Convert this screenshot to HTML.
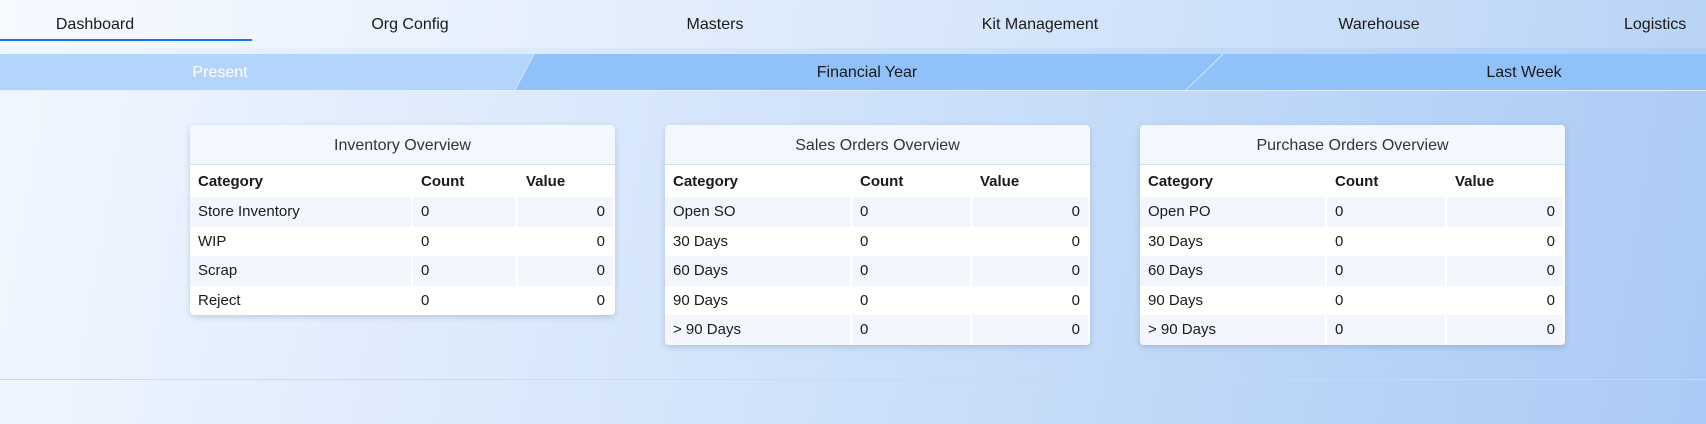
<!DOCTYPE html>
<html><head><meta charset="utf-8"><style>
*{box-sizing:border-box;margin:0;padding:0}
body{width:1706px;height:424px;overflow:hidden;font-family:"Liberation Sans",sans-serif;color:#1a1a1a;
background:linear-gradient(100deg,#f1f7ff 0%,#d6e6fb 40%,#bcd6f8 75%,#abcaf5 100%);position:relative}
.nav{position:absolute;left:0;top:0;width:1706px;height:48px;background:linear-gradient(90deg,rgba(255,255,255,.35),rgba(255,255,255,.15))}
.nav span{position:absolute;top:16px;font-size:16px;transform:translateX(-50%);white-space:nowrap}
.ul{position:absolute;left:0;top:39px;width:252px;height:2px;background:#1a73e8}
.sub{position:absolute;left:0;top:54px;width:1706px;height:36px;background:#90c1f9}
.sub span{position:absolute;top:10px;font-size:16px;transform:translateX(-50%)}
.line{position:absolute;left:0;width:1706px;height:1px;background:#e4eefc}
.card{position:absolute;top:125px;width:425px;background:#fff;border-radius:4px;box-shadow:0 2px 6px rgba(60,90,140,.25);overflow:hidden}
.card h3{height:40px;background:#f3f8fe;border-bottom:1px solid #d3dfec;font-weight:normal;font-size:16px;text-align:center;line-height:42px;color:#333}
table{width:100%;border-collapse:collapse;font-size:15px;table-layout:fixed}
td,th{height:29.5px;padding:0 8px;text-align:left;border-right:2px solid #fff}
th{font-weight:bold;height:32px}
td:nth-child(3){text-align:right}
tr.s td{background:#f3f7fd}
</style></head><body>
<div class="nav">
<span style="left:95px">Dashboard</span>
<span style="left:410px">Org Config</span>
<span style="left:715px">Masters</span>
<span style="left:1040px">Kit Management</span>
<span style="left:1379px">Warehouse</span>
<span style="left:1624px;transform:none">Logistics</span>
<div class="ul"></div>
</div>
<div class="sub">
<svg width="1706" height="36" style="position:absolute;left:0;top:0">
<polygon points="0,0 534,0 515,36 0,36" fill="#b3d4fb"/>
<line x1="534" y1="0" x2="515" y2="36" stroke="#d8e8fd" stroke-width="1"/>
<line x1="1223" y1="0" x2="1186" y2="36" stroke="#d8e8fd" stroke-width="1"/>
</svg>
<span style="left:220px;color:#fff">Present</span>
<span style="left:867px">Financial Year</span>
<span style="left:1524px">Last Week</span>
</div>
<div class="line" style="top:90px"></div>
<div class="line" style="top:379px;background:#c6daf5"></div>

<div class="card" style="left:190px"><h3>Inventory Overview</h3><table>
<colgroup><col style="width:222px"><col style="width:105px"><col></colgroup>
<tr><th>Category</th><th>Count</th><th>Value</th></tr>
<tr class="s"><td>Store Inventory</td><td>0</td><td>0</td></tr>
<tr><td>WIP</td><td>0</td><td>0</td></tr>
<tr class="s"><td>Scrap</td><td>0</td><td>0</td></tr>
<tr><td>Reject</td><td>0</td><td>0</td></tr>
</table></div>

<div class="card" style="left:665px"><h3>Sales Orders Overview</h3><table>
<colgroup><col style="width:186px"><col style="width:120px"><col></colgroup>
<tr><th>Category</th><th>Count</th><th>Value</th></tr>
<tr class="s"><td>Open SO</td><td>0</td><td>0</td></tr>
<tr><td>30 Days</td><td>0</td><td>0</td></tr>
<tr class="s"><td>60 Days</td><td>0</td><td>0</td></tr>
<tr><td>90 Days</td><td>0</td><td>0</td></tr>
<tr class="s"><td>&gt; 90 Days</td><td>0</td><td>0</td></tr>
</table></div>

<div class="card" style="left:1140px"><h3>Purchase Orders Overview</h3><table>
<colgroup><col style="width:186px"><col style="width:120px"><col></colgroup>
<tr><th>Category</th><th>Count</th><th>Value</th></tr>
<tr class="s"><td>Open PO</td><td>0</td><td>0</td></tr>
<tr><td>30 Days</td><td>0</td><td>0</td></tr>
<tr class="s"><td>60 Days</td><td>0</td><td>0</td></tr>
<tr><td>90 Days</td><td>0</td><td>0</td></tr>
<tr class="s"><td>&gt; 90 Days</td><td>0</td><td>0</td></tr>
</table></div>
</body></html>
